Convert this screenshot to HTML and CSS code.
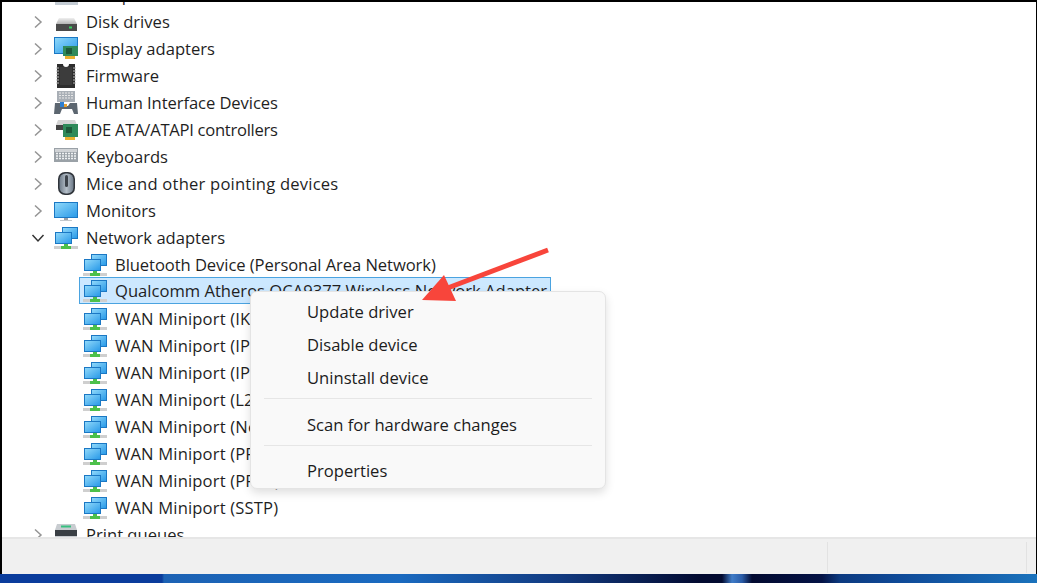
FILE: index.html
```html
<!DOCTYPE html>
<html lang="en">
<head>
<meta charset="utf-8">
<title>Device Manager</title>
<link rel="stylesheet" href="styles.css">
</head>
<body>
<svg class="defs" width="0" height="0" aria-hidden="true">
  <defs>
    <linearGradient id="scr" x1="0" y1="0" x2="1" y2="1"><stop offset="0" stop-color="#8fd8fa"/><stop offset="1" stop-color="#2a9ae8"/></linearGradient>
    <linearGradient id="mse" x1="0" y1="0" x2="1" y2="0"><stop offset="0" stop-color="#6f7c8a"/><stop offset=".5" stop-color="#b4bec8"/><stop offset="1" stop-color="#6f7c8a"/></linearGradient>
    <linearGradient id="dsk" x1="0" y1="0" x2="0" y2="1"><stop offset="0" stop-color="#f0f0f0"/><stop offset="1" stop-color="#b4b4b4"/></linearGradient>
    <symbol id="chev-r" viewBox="0 0 10 14"><path d="M2 1.500 8 7 2 12.500" fill="none" stroke="#949494" stroke-width="1.500"/></symbol>
    <symbol id="chev-d" viewBox="0 0 14 10"><path d="M1.500 2 7 8l5.500-6" fill="none" stroke="#333" stroke-width="1.500"/></symbol>
    <symbol id="computer" viewBox="0 0 24 24">
      <rect x="1" y="4" width="23" height="14" fill="#1b78c4"/>
      <rect x="1" y="19" width="23" height="3" fill="#c4ccd4"/>
    </symbol>
    <symbol id="net" viewBox="0 0 24 24">
      <rect x="0" y="20" width="24" height="3" fill="#cfcfcf"/>
      <path d="M10 16h4v4h3v3H7v-3h3z" fill="#4cc04a"/>
      <rect x="8" y="1" width="16" height="12" fill="#1b78c4"/>
      <rect x="9" y="2" width="14" height="10" fill="url(#scr)"/>
      <rect x="1" y="6" width="17" height="12" fill="#1b78c4"/>
      <rect x="2" y="7" width="15" height="10" fill="url(#scr)"/>
    </symbol>
    <symbol id="disk" viewBox="0 0 24 24">
      <path d="M5 8h15l3 6H2z" fill="url(#dsk)"/>
      <path d="M2 14h21v7H2z" fill="#4a4a4a"/>
      <rect x="15" y="16.500" width="3" height="2" fill="#38d060"/>
    </symbol>
    <symbol id="display" viewBox="0 0 24 24">
      <rect x="0" y="0" width="24" height="17" fill="#1b78c4"/>
      <rect x="1" y="1" width="22" height="15" fill="url(#scr)"/>
      <rect x="9" y="9" width="15" height="10" fill="#2f8a5a"/>
      <rect x="12" y="11" width="6" height="6" fill="#1d5a3a"/>
      <rect x="11" y="19" width="10" height="3" fill="#e8b030"/>
    </symbol>
    <symbol id="chip" viewBox="0 0 24 24">
      <path d="M3 0h6a3 3 0 0 0 6 0h6v24H3z" fill="#2e2e2e"/>
      <path d="M2 4h20M2 7h20M2 10h20M2 13h20M2 16h20M2 19h20" stroke="#bbb" stroke-width="1" stroke-dasharray="3 14"/>
      <rect x="6" y="3" width="12" height="18" fill="#3c3c3c"/>
    </symbol>
    <symbol id="hid" viewBox="0 0 24 24">
      <rect x="3" y="0" width="18" height="11" fill="#a9afb6"/>
      <path d="M5 2h14M5 4.500h14M5 7h14" stroke="#e8e8e8" stroke-dasharray="2 1"/>
      <path d="M1 12h7l2 3h4l2-3h7l1 11h-4l-2-5H8l-2 5H0z" fill="#5c6670"/>
      <rect x="6" y="11" width="4" height="5" fill="#2f7fd0"/>
      <rect x="10" y="13" width="3" height="3" fill="#e8a030"/>
    </symbol>
    <symbol id="ide" viewBox="0 0 24 24">
      <path d="M4 2h17l2 5H2z" fill="#d4d4d4"/>
      <rect x="2" y="7" width="21" height="5" fill="#444"/>
      <rect x="9" y="6" width="15" height="13" fill="#2f8a5a"/>
      <rect x="12" y="9" width="6" height="6" fill="#1d5a3a"/>
      <rect x="11" y="19" width="10" height="3" fill="#e8b030"/>
    </symbol>
    <symbol id="kbd" viewBox="0 0 24 24">
      <rect x="0" y="3" width="24" height="14" fill="#9aa1a7"/>
      <rect x="1" y="4" width="22" height="3" fill="#d0d3d6"/>
      <path d="M2 8.500h20M2 11h20M2 13.500h20" stroke="#f0f2f4" stroke-width="1.500" stroke-dasharray="2 1"/>
    </symbol>
    <symbol id="mouse" viewBox="0 0 24 24">
      <rect x="4" y="0" width="17" height="23" rx="7" fill="#2f343a"/>
      <rect x="5.500" y="1.500" width="14" height="20" rx="6" fill="url(#mse)"/>
      <rect x="11" y="3" width="3" height="12" rx="1.500" fill="#3c424a"/>
    </symbol>
    <symbol id="monitor" viewBox="0 0 24 24">
      <rect x="0" y="3" width="24" height="16" fill="#1b78c4"/>
      <rect x="1" y="4" width="22" height="14" fill="url(#scr)"/>
      <rect x="10" y="19" width="4" height="2" fill="#9aa0a6"/>
      <rect x="6" y="21" width="12" height="1" fill="#c4c8cc"/>
    </symbol>
    <symbol id="printer" viewBox="0 0 24 24">
      <path d="M3 1h18l2 6v10H1V7z" fill="#c8ccd0"/>
      <rect x="7" y="2.500" width="10" height="2" fill="#38c080"/>
      <rect x="1" y="7" width="22" height="6" fill="#3a3f44"/>
    </symbol>
  </defs>
</svg>

<div class="screen">
  <main class="tree">
    <div class="row cat"><svg class="chev"><use href="#chev-r"/></svg><svg class="ico"><use href="#computer"/></svg><span>Computer</span></div>
    <div class="row cat"><svg class="chev"><use href="#chev-r"/></svg><svg class="ico"><use href="#disk"/></svg><span>Disk drives</span></div>
    <div class="row cat"><svg class="chev"><use href="#chev-r"/></svg><svg class="ico"><use href="#display"/></svg><span>Display adapters</span></div>
    <div class="row cat"><svg class="chev"><use href="#chev-r"/></svg><svg class="ico"><use href="#chip"/></svg><span>Firmware</span></div>
    <div class="row cat"><svg class="chev"><use href="#chev-r"/></svg><svg class="ico"><use href="#hid"/></svg><span class="narrow">Human Interface Devices</span></div>
    <div class="row cat"><svg class="chev"><use href="#chev-r"/></svg><svg class="ico"><use href="#ide"/></svg><span class="caps">IDE ATA/ATAPI controllers</span></div>
    <div class="row cat"><svg class="chev"><use href="#chev-r"/></svg><svg class="ico"><use href="#kbd"/></svg><span>Keyboards</span></div>
    <div class="row cat"><svg class="chev"><use href="#chev-r"/></svg><svg class="ico"><use href="#mouse"/></svg><span class="wide">Mice and other pointing devices</span></div>
    <div class="row cat"><svg class="chev"><use href="#chev-r"/></svg><svg class="ico"><use href="#monitor"/></svg><span>Monitors</span></div>
    <div class="row cat"><svg class="chev chev-open"><use href="#chev-d"/></svg><svg class="ico"><use href="#net"/></svg><span>Network adapters</span></div>
    <div class="row child"><svg class="ico"><use href="#net"/></svg><span class="narrow">Bluetooth Device (Personal Area Network)</span></div>
    <div class="row child selected"><svg class="ico"><use href="#net"/></svg><span>Qualcomm Atheros QCA9377 Wireless Network Adapter</span></div>
    <div class="row child"><svg class="ico"><use href="#net"/></svg><span class="wan">WAN Miniport (IKEv2)</span></div>
    <div class="row child"><svg class="ico"><use href="#net"/></svg><span class="wan">WAN Miniport (IP)</span></div>
    <div class="row child"><svg class="ico"><use href="#net"/></svg><span class="wan">WAN Miniport (IPv6)</span></div>
    <div class="row child"><svg class="ico"><use href="#net"/></svg><span class="wan">WAN Miniport (L2TP)</span></div>
    <div class="row child"><svg class="ico"><use href="#net"/></svg><span class="wan">WAN Miniport (Network Monitor)</span></div>
    <div class="row child"><svg class="ico"><use href="#net"/></svg><span class="wan">WAN Miniport (PPPOE)</span></div>
    <div class="row child"><svg class="ico"><use href="#net"/></svg><span class="wan">WAN Miniport (PPTP)</span></div>
    <div class="row child"><svg class="ico"><use href="#net"/></svg><span class="wan">WAN Miniport (SSTP)</span></div>
    <div class="row cat"><svg class="chev"><use href="#chev-r"/></svg><svg class="ico"><use href="#printer"/></svg><span>Print queues</span></div>
  </main>
  <footer class="status">
    <div class="pane pane-main"></div>
    <div class="pane pane-side"></div>
    <div class="pane pane-end"></div>
  </footer>
</div>
<div class="taskbar"></div>

<nav class="menu">
  <div class="item">Update driver</div>
  <div class="item">Disable device</div>
  <div class="item">Uninstall device</div>
  <div class="sep sep-a"></div>
  <div class="item">Scan for hardware changes</div>
  <div class="sep sep-b"></div>
  <div class="item">Properties</div>
</nav>

<svg class="arrow" width="140" height="70" viewBox="410 240 140 70" aria-hidden="true">
  <path d="M548 250 445 289" stroke="#f8453b" stroke-width="5" fill="none"/>
  <path d="M444 275 422 300 456 301z" fill="#f8453b"/>
</svg>
</body>
</html>
```

FILE: styles.css
```css
html, body {
  margin: 0;
  padding: 0;
  height: 583px;
  overflow: hidden;
  background: #000;
}

body {
  position: relative;
  display: flex;
  flex-direction: column;
  font-family: "Open Sans", "Noto Sans", sans-serif;
  color: #1f1f1f;
}

.defs {
  position: absolute;
}

.screen {
  display: flex;
  flex-direction: column;
  flex: none;
  height: 572px;
  margin: 2px 1px 0 2px;
  background: #fff;
}

.tree {
  flex: 1;
  min-height: 0;
  overflow: hidden;
}

.row {
  display: flex;
  align-items: center;
  box-sizing: border-box;
  height: 27px;
  font-size: 16.6px;
  white-space: nowrap;
}

.tree .row:first-child {
  margin-top: -21px;
}

.narrow {
  letter-spacing: -.08px;
}

.caps {
  letter-spacing: -.28px;
}

.wide {
  letter-spacing: .2px;
}

.wan {
  letter-spacing: .15px;
}

.cat {
  padding-left: 31px;
}

.chev {
  flex: none;
  width: 10px;
  height: 14px;
  margin-right: 11px;
}

.chev-open {
  width: 14px;
  height: 10px;
  margin-left: -2px;
  margin-right: 9px;
}

.ico {
  flex: none;
  width: 24px;
  height: 24px;
  margin-right: 8px;
}

.child {
  padding-left: 81px;
  width: 500px;
}

.selected {
  width: 472px;
  margin: -1px 0 1px 77px;
  padding-left: 3px;
  background: #cce8ff;
  border: 1px solid #4aa3e0;
  overflow: hidden;
}

.status {
  flex: none;
  display: flex;
  height: 37px;
  box-sizing: border-box;
  border-top: 2px solid #e6e6e6;
  background: #f0f0f0;
}

.pane {
  box-sizing: border-box;
  border-right: 1px solid #e2e2e2;
  margin: 3px 0 1px;
}

.pane-main {
  width: 826px;
}

.pane-side {
  width: 199px;
}

.pane-end {
  flex: 1;
  border-right: 0;
}

.taskbar {
  flex: none;
  height: 9px;
  background: linear-gradient(90deg, #0a3c9c 0, #0a3c9c 162px, #1c62b4 164px, #1a6ac0 400px, #123a80 560px, #020a30 700px, #020a30 722px, #3f7cc8 732px, #2a5ca8 742px, #020a30 752px, #041245 822px, #0c3a80 840px, #0f4a98 900px, #1a72bc 1037px);
}

.menu {
  position: absolute;
  left: 250px;
  top: 291px;
  box-sizing: border-box;
  width: 356px;
  height: 198px;
  padding-top: 3px;
  background: #f9f9f9;
  border: 1px solid #e4e4e4;
  border-radius: 7px;
  box-shadow: 0 4px 10px rgba(0, 0, 0, .13);
  font-size: 16.6px;
  color: #1c1c1c;
}

.item {
  height: 33px;
  line-height: 33px;
  padding-left: 56px;
}

.sep {
  height: 1px;
  margin: 4px 13px;
  background: #e6e6e6;
}

.sep-a {
  margin-bottom: 9px;
}

.sep-b {
  margin-bottom: 8px;
}

.arrow {
  position: absolute;
  left: 410px;
  top: 240px;
}
```
